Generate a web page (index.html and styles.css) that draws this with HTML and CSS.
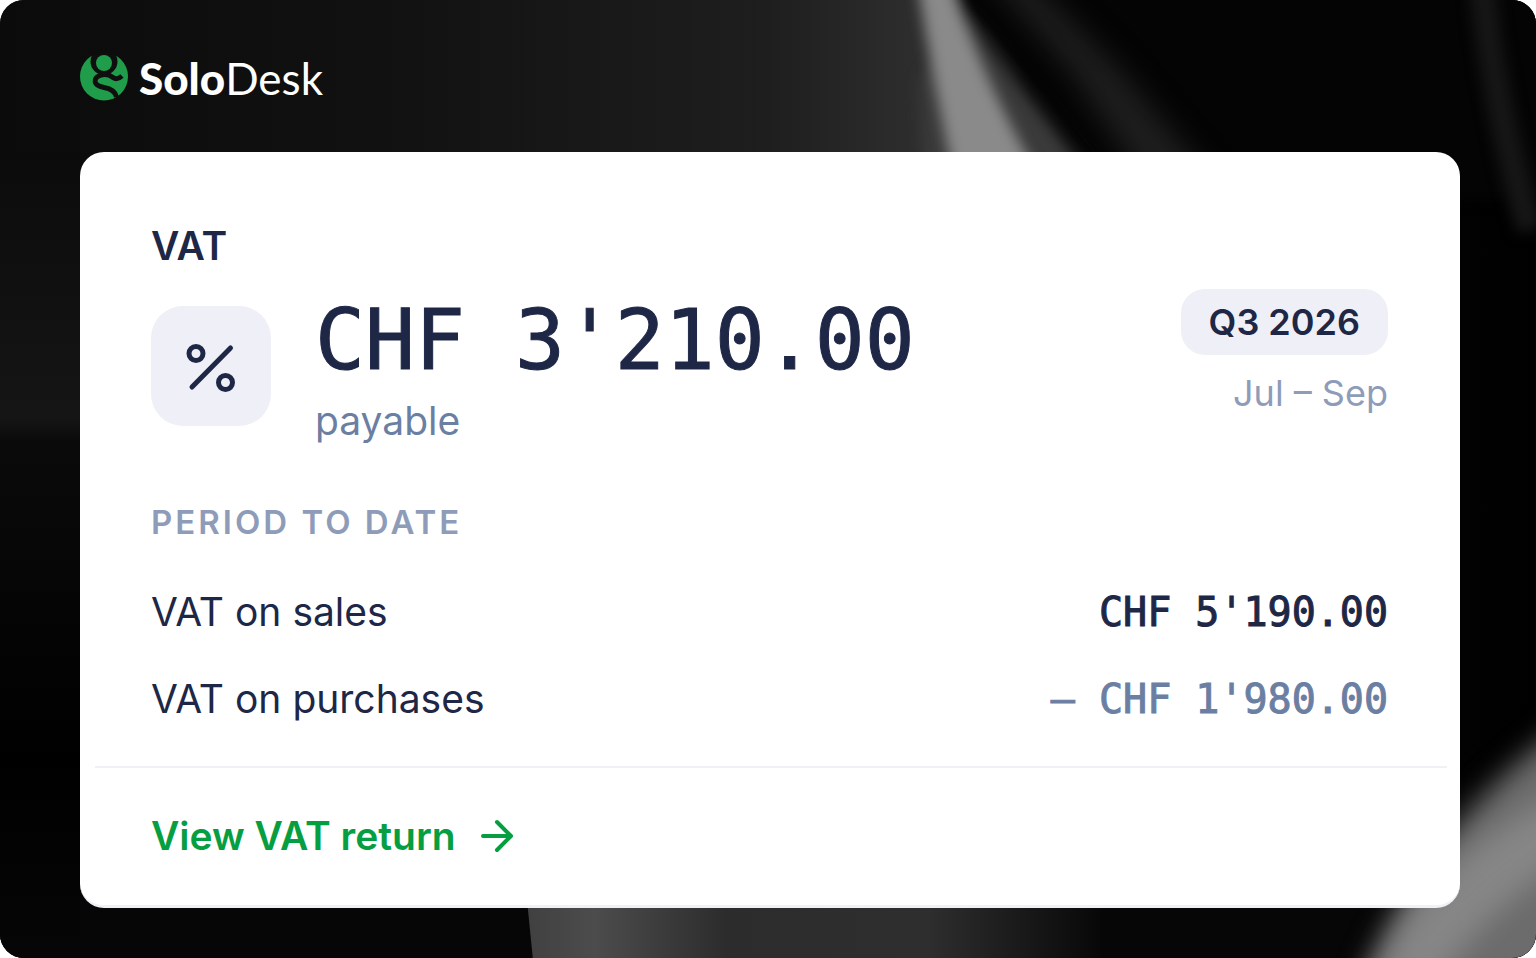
FILE: index.html
```html
<!DOCTYPE html>
<html lang="en">

<head>
    <meta charset="UTF-8">
    <meta name="viewport" content="width=device-width, initial-scale=1.0">
    <title>SoloDesk - VAT</title>
    <link rel="stylesheet" href="styles.css">
</head>

<body>
    <div class="frame">
        <!-- Dark fabric backdrop -->
        <svg class="backdrop" viewBox="0 0 1536 958" preserveAspectRatio="none" aria-hidden="true">
            <defs>
                <linearGradient id="base" x1="0" y1="0" x2="1" y2="0">
                    <stop offset="0" stop-color="#0b0b0b" />
                    <stop offset="0.25" stop-color="#111111" />
                    <stop offset="0.5" stop-color="#1e1e1e" />
                    <stop offset="0.61" stop-color="#303030" />
                    <stop offset="0.67" stop-color="#0c0c0c" />
                    <stop offset="1" stop-color="#000000" />
                </linearGradient>
                <linearGradient id="hem" x1="0" y1="0" x2="1" y2="0">
                    <stop offset="0" stop-color="#404040" />
                    <stop offset="0.12" stop-color="#4c4c4c" />
                    <stop offset="0.35" stop-color="#2c2c2c" />
                    <stop offset="0.7" stop-color="#2e2e2e" />
                    <stop offset="1" stop-color="#080808" />
                </linearGradient>
                <linearGradient id="side" x1="0" y1="0" x2="0" y2="1">
                    <stop offset="0" stop-color="#0b0b0b" />
                    <stop offset="0.33" stop-color="#151515" />
                    <stop offset="0.36" stop-color="#0a0a0a" />
                    <stop offset="0.75" stop-color="#000000" />
                    <stop offset="1" stop-color="#060606" />
                </linearGradient>
                <filter id="soft" filterUnits="userSpaceOnUse" x="-100" y="-100" width="1736" height="1158" color-interpolation-filters="sRGB">
                    <feGaussianBlur stdDeviation="7" />
                </filter>
                <filter id="softer" filterUnits="userSpaceOnUse" x="-100" y="-100" width="1736" height="1158" color-interpolation-filters="sRGB">
                    <feGaussianBlur stdDeviation="14" />
                </filter>
            </defs>
            <rect width="1536" height="958" fill="url(#base)" />
            <rect y="152" width="80" height="806" fill="url(#side)" />
            <path d="M960 -60 V0 L1030 80 L1130 200 H1620 V-60 Z" fill="#040404" filter="url(#soft)" />
            <path d="M975 -40 L1070 70 L1150 190 L1220 190 L1120 70 L1010 -40 Z" fill="#1e1e1e" filter="url(#softer)" />
            <path d="M1480 -40 Q1490 90 1530 230" stroke="#161616" stroke-width="26" fill="none" filter="url(#soft)" />
            <path d="M920 80 L925 190 L1100 190 L1030 100 L965 20 Z" fill="#3a3a3a" filter="url(#soft)" />
            <path d="M914 -40 L944 -40 Q980 80 1050 195 L958 195 Q932 80 914 -40 Z" fill="#8a8a8a" filter="url(#soft)" />
            <rect x="80" y="880" width="1456" height="78" fill="#060606" />
            <path d="M526 890 H1100 V980 H535 Z" fill="url(#hem)" />
            <path d="M1620 690 Q1430 800 1355 1000 H1620 Z" fill="#6c6c6c" filter="url(#softer)" />
            <path d="M1620 770 Q1420 840 1370 1000 L1430 1000 Q1480 900 1620 830 Z" fill="#868686" filter="url(#softer)" />
        </svg>

        <header class="header">
            <svg class="logo-mark" viewBox="0 0 48 46" aria-hidden="true">
                <circle cx="24" cy="21.500" r="24" fill="#1f9d4b" />
                <circle cx="24" cy="6.500" r="13.500" fill="#0f0f0f" />
                <path d="M42 21 Q37 25.500 33 22.500 Q27 18 20 20.500 Q14.500 22.500 15.200 27 Q16 31 24 32.500 Q35 34.500 36.500 42" fill="none" stroke="#0f0f0f" stroke-width="5" />
                <circle cx="24" cy="8" r="8" fill="#1f9d4b" />
            </svg>
            <span class="logo-text"><b>Solo</b>Desk</span>
        </header>

        <main class="card">
            <div class="card-body">
                <h1 class="title">VAT</h1>
                <div class="summary">
                    <div class="icon-box">
                        <svg class="percent" viewBox="0 0 120 120" aria-hidden="true">
                            <path d="M41 81 L79.500 42" />
                            <circle cx="45" cy="47.500" r="7" />
                            <circle cx="74.500" cy="76.500" r="7" />
                        </svg>
                    </div>
                    <div class="total">
                        <div class="total-amount">CHF 3'210.00</div>
                        <div class="total-note">payable</div>
                    </div>
                    <div class="period">
                        <span class="quarter">Q3 2026</span>
                        <span class="months">Jul – Sep</span>
                    </div>
                </div>
                <h2 class="subtitle" id="ptd">PERIOD TO DATE</h2>
                <table class="lines" aria-labelledby="ptd">
                    <tr>
                        <th scope="row">VAT on sales</th>
                        <td>CHF 5'190.00</td>
                    </tr>
                    <tr>
                        <th scope="row">VAT on purchases</th>
                        <td class="minus">– CHF 1'980.00</td>
                    </tr>
                </table>
            </div>
            <footer class="card-footer">
                <a class="link" href="#">View VAT return
                    <svg class="arrow" viewBox="0 0 34 34" aria-hidden="true">
                        <path d="M3 17 H31 M17 3 L31 17 L17 31" />
                    </svg>
                </a>
            </footer>
        </main>
    </div>
</body>

</html>
```
FILE: styles.css
```css
* {
    box-sizing: border-box;
}

body {
    margin: 0;
    background-color: #fff;
    font-family: Inter, sans-serif;
    font-size: 39px;
    line-height: 48px;
    color: #1e2746;
}

.frame {
    position: relative;
    display: flex;
    flex-direction: column;
    min-height: 100vh;
    padding: 0 76px 50px 80px;
    border-radius: 24px;
    overflow: hidden;
    background-color: #0a0a0a;
}

/* Sits behind the header and the card */
.backdrop {
    position: absolute;
    top: 0;
    left: 0;
    width: 100%;
    height: 100%;
}

.header,
.card {
    position: relative;
}

.header {
    display: flex;
    align-items: center;
    gap: 11px;
    height: 152px;
    padding-top: 4px;
    color: #fff;
}

.logo-mark {
    width: 48px;
    height: 46px;
}

.logo-text {
    font-family: Lato, sans-serif;
    font-size: 44px;
}

.logo-text b {
    font-weight: 900;
}

.card {
    flex: 1;
    display: flex;
    flex-direction: column;
    background-color: #fff;
    border-radius: 24px;
    border-bottom: 3px solid #eff1f6;
}

.card-body {
    flex: 1;
    padding: 70px 72px 24px 71px;
}

.title {
    margin: 0 0 19px;
    font-size: 39px;
    font-weight: 600;
}

.summary {
    display: flex;
    align-items: flex-start;
    gap: 44px;
    margin-bottom: 49px;
}

.icon-box {
    width: 120px;
    height: 120px;
    margin-top: 17px;
    border-radius: 32px;
    background-color: #eff0f7;
}

.percent {
    display: block;
    fill: none;
    stroke: #1e2746;
    stroke-width: 5;
    stroke-linecap: round;
}

.total {
    flex: 1;
}

.total-amount {
    font-family: "DejaVu Sans Mono", monospace;
    font-size: 83px;
    line-height: 104px;
    -webkit-text-stroke: 1px #1e2746;
}

.total-note {
    line-height: 56px;
    color: #6b7fa3;
}

.period {
    display: flex;
    flex-direction: column;
    align-items: flex-end;
    gap: 14px;
    font-size: 36px;
}

.quarter {
    padding: 9px 28px;
    border-radius: 24px;
    background-color: #eff0f7;
    font-weight: 600;
}

.months {
    color: #8e9cb9;
}

.subtitle {
    margin: 0 0 22px;
    font-size: 33px;
    font-weight: 600;
    letter-spacing: 3px;
    color: #8e9cb9;
}

.lines {
    width: 100%;
    border-collapse: collapse;
}

.lines th,
.lines td {
    height: 87px;
    padding: 0;
    font-weight: 400;
    text-align: left;
}

.lines td {
    font-family: "DejaVu Sans Mono", monospace;
    font-size: 40px;
    text-align: right;
    -webkit-text-stroke: 1px currentColor;
}

.lines .minus {
    color: #6b7fa3;
}

.card-footer {
    margin: 0 13px 0 15px;
    padding: 44px 56px 45px;
    border-top: 2px solid #f0f1f5;
}

.link {
    display: flex;
    align-items: center;
    gap: 24px;
    color: #059e40;
    font-weight: 600;
    text-decoration: none;
}

.arrow {
    width: 34px;
    height: 34px;
    fill: none;
    stroke: #059e40;
    stroke-width: 4;
    stroke-linecap: round;
    stroke-linejoin: round;
}
```
